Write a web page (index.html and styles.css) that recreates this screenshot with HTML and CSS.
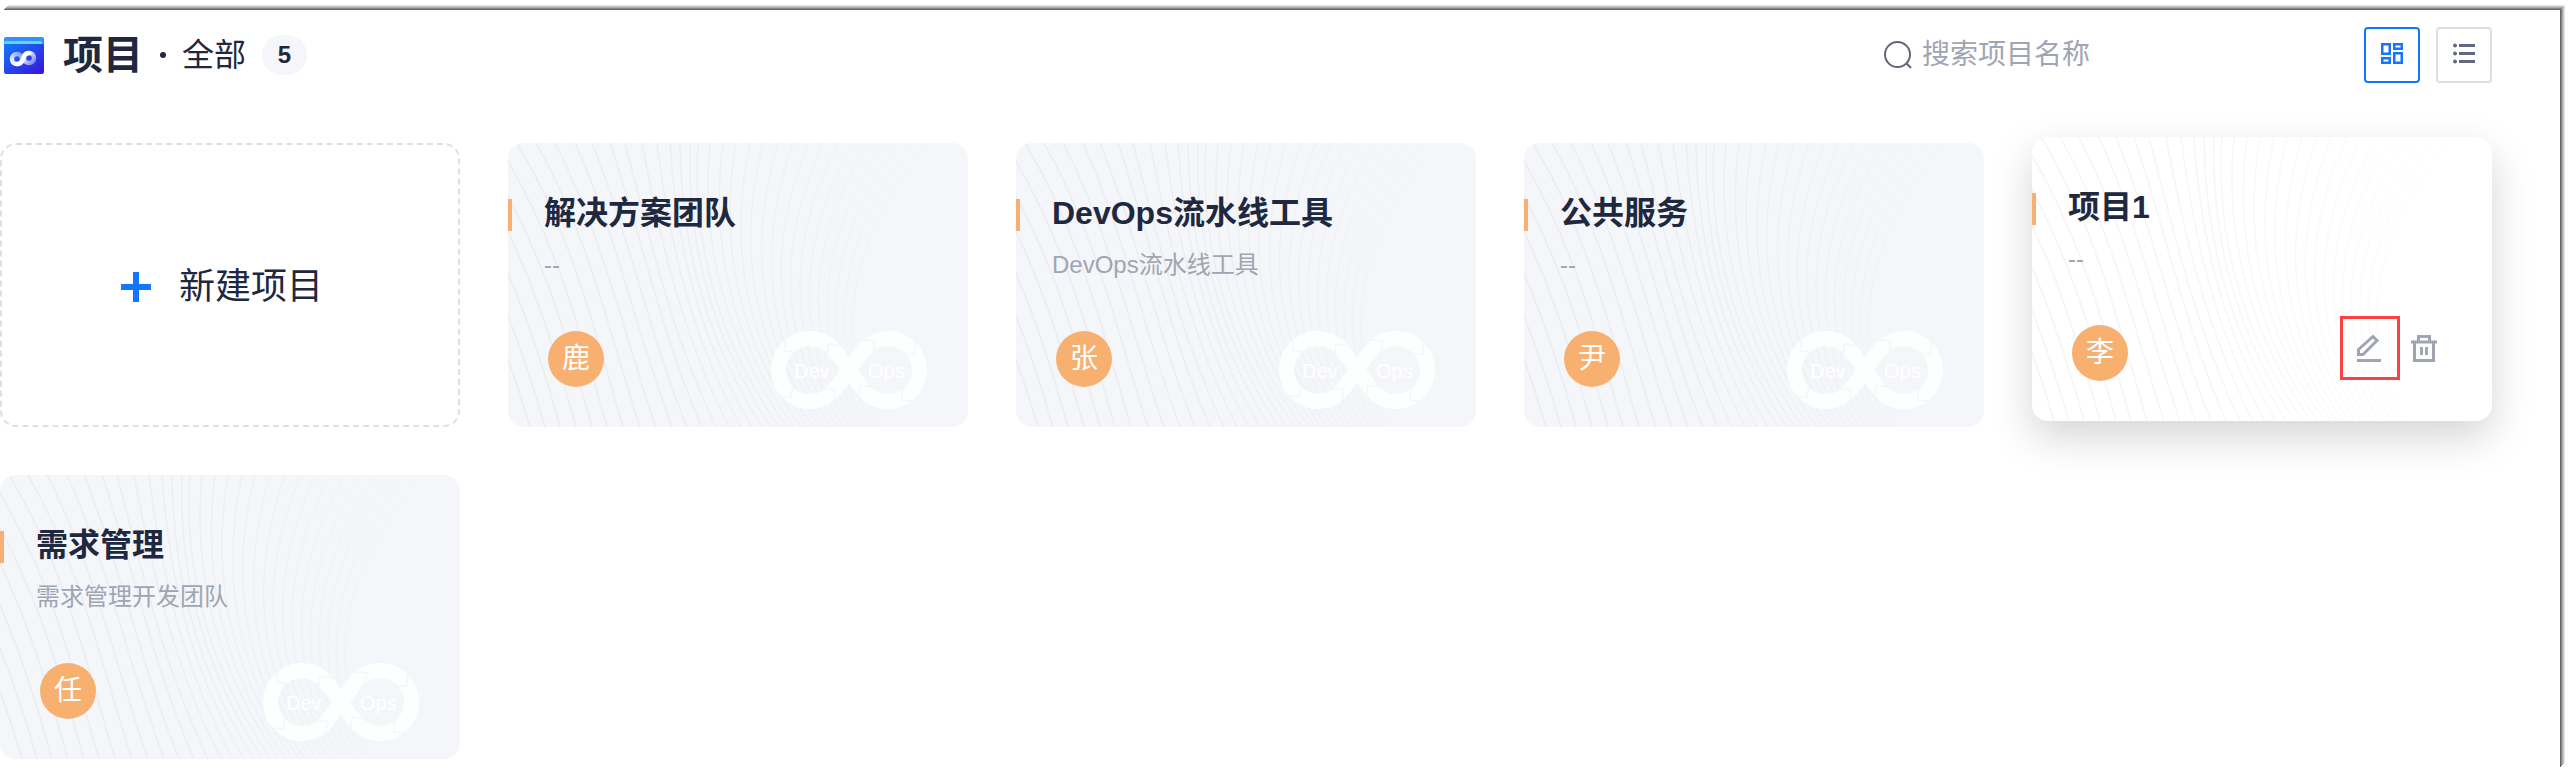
FILE: index.html
```html
<!DOCTYPE html>
<html lang="zh-CN">
<head>
<meta charset="utf-8">
<meta name="viewport" content="width=device-width, initial-scale=1">
<title>项目</title>
<link rel="stylesheet" href="styles.css">
</head>
<body>
<svg class="defs" aria-hidden="true">
  <defs>
    <linearGradient id="fade" gradientUnits="userSpaceOnUse" x1="0" y1="0" x2="460" y2="0">
      <stop offset="0" stop-color="#000" stop-opacity=".04"/>
      <stop offset=".4" stop-color="#000" stop-opacity=".035"/>
      <stop offset=".95" stop-color="#000" stop-opacity="0"/>
    </linearGradient>
    <symbol id="waves" viewBox="0 0 460 284" preserveAspectRatio="none">
      <path fill="none" stroke="url(#fade)" stroke-width="1.5" d="M-115 0C-45 95-5 190 22 284M-93 0C-25 95 10 190 37 284M-72 0C-6 95 26 190 52 284M-51 0C14 95 42 190 68 284M-31 0C31 95 58 190 84 284M-11 0C49 95 72 190 99 284M9 0C66 95 87 190 115 284M28 0C82 95 101 190 132 284M47 0C96 95 115 190 148 284M67 0C110 95 128 190 164 284M84 0C122 95 141 190 179 284M102 0C134 95 153 190 194 284M117 0C142 95 163 190 208 284M134 0C152 95 173 190 221 284M149 0C161 95 181 190 233 284M162 0C168 95 188 190 244 284M172 0C173 95 194 190 254 284M182 0C179 95 200 190 263 284M190 0C184 95 206 190 271 284M202 0C193 95 213 190 279 284M215 0C203 95 219 190 286 284M228 0C212 95 226 190 293 284M242 0C222 95 232 190 299 284M255 0C231 95 239 190 305 284M270 0C242 95 246 190 311 284M285 0C252 95 253 190 317 284M300 0C262 95 260 190 323 284M315 0C272 95 267 190 329 284M330 0C282 95 275 190 335 284M345 0C292 95 283 190 341 284M360 0C302 95 291 190 347 284M375 0C312 95 299 190 353 284M390 0C322 95 307 190 359 284M405 0C332 95 315 190 365 284M420 0C342 95 323 190 371 284"/>
    </symbol>
    <symbol id="devops" viewBox="0 0 156 78">
      <path fill="none" stroke="#fdfefe" stroke-width="15" d="M64.4 20.4A31.5 31.5 0 1 0 64.4 57.6L91.6 20.4A31.5 31.5 0 1 1 91.6 57.6Z"/>
      <path fill="none" stroke="#f5f6fa" stroke-width="1.5" d="M14 7V20L27 21M56 27L57 13L72 15M11 65L20 66L22 54M54 58L64 58L63 70M91 9L104 10L102 21M130 22L144 23L145 9M101 56L89 54L88 64M132 56L131 69L144 70"/>
      <text class="watermark-text" x="23" y="47">Dev</text>
      <text class="watermark-text" x="97" y="47">Ops</text>
    </symbol>
  </defs>
</svg>
<main class="page">
  <header class="header">
    <svg class="brand" viewBox="0 0 48 48" aria-hidden="true">
      <defs>
        <linearGradient id="box" x1="0" y1="0" x2="1" y2="1"><stop offset="0" stop-color="#1478fa"/><stop offset="1" stop-color="#3a12dc"/></linearGradient>
        <linearGradient id="loop-left" x1="0" y1="1" x2="1" y2="0"><stop offset="0" stop-color="#fff"/><stop offset="1" stop-color="#fff" stop-opacity=".4"/></linearGradient>
        <linearGradient id="loop-right" x1="0" y1="0" x2="1" y2="1"><stop offset="0" stop-color="#fff"/><stop offset="1" stop-color="#fff" stop-opacity=".4"/></linearGradient>
      </defs>
      <rect x="4" y="6" width="40" height="16" rx="2" fill="#3591ff"/>
      <path fill="#5cdbd8" d="M4 12Q4 10 6 10H40Q42 10 42 12V16H4Z"/>
      <path fill="url(#box)" d="M4 13H44V41Q44 43 42 43H6Q4 43 4 41Z"/>
      <circle cx="17" cy="28" r="5" fill="none" stroke="url(#loop-left)" stroke-width="4.500"/>
      <circle cx="29" cy="27" r="5" fill="none" stroke="url(#loop-right)" stroke-width="4.500"/>
      <path fill="none" stroke="#fff" stroke-width="4.500" stroke-linecap="round" d="M17 33C21 33 22 31 23 28C24 24 26 22 29 22"/>
    </svg>
    <h1 class="title">项目</h1>
    <span class="dot"></span>
    <span class="scope">全部</span>
    <span class="count">5</span>
    <label class="search">
      <svg class="search-icon" viewBox="0 0 28 28" aria-hidden="true"><circle cx="13.500" cy="13.500" r="12.500"/><path d="M22 22L27 27"/></svg>
      <input class="search-input" type="text" placeholder="搜索项目名称" aria-label="搜索项目名称">
    </label>
    <div class="views">
      <button class="view active" type="button" aria-label="卡片视图">
        <svg viewBox="0 0 24 24" width="24" height="24" aria-hidden="true"><path fill="none" stroke="currentColor" stroke-width="2.500" d="M2.250 1.250h7.500v9.500h-7.500zM14.250 1.250h7.500v4.500h-7.500zM2.250 15.250h7.500v4.500h-7.500zM14.250 10.250h7.500v9.500h-7.500z"/></svg>
      </button>
      <button class="view" type="button" aria-label="列表视图">
        <svg viewBox="0 0 24 24" width="24" height="24" aria-hidden="true"><path fill="none" stroke="currentColor" stroke-width="3" d="M7 2.500h16M7 10.500h16M7 18.500h16"/><g fill="currentColor"><circle cx="3" cy="2.500" r="2"/><circle cx="3" cy="10.500" r="2"/><circle cx="3" cy="18.500" r="2"/></g></svg>
      </button>
    </div>
  </header>
  <section class="grid">
    <button class="card create" type="button">
      <svg class="plus" viewBox="0 0 30 30" aria-hidden="true"><path stroke="currentColor" stroke-width="6" d="M15 0V30M0 15H30"/></svg>
      <span>新建项目</span>
    </button>
    <article class="card project">
      <svg class="waves" aria-hidden="true"><use href="#waves"/></svg>
      <svg class="watermark" aria-hidden="true"><use href="#devops"/></svg>
      <h2 class="name">解决方案团队</h2>
      <p class="desc">--</p>
      <span class="avatar">鹿</span>
    </article>
    <article class="card project">
      <svg class="waves" aria-hidden="true"><use href="#waves"/></svg>
      <svg class="watermark" aria-hidden="true"><use href="#devops"/></svg>
      <h2 class="name">DevOps流水线工具</h2>
      <p class="desc">DevOps流水线工具</p>
      <span class="avatar">张</span>
    </article>
    <article class="card project">
      <svg class="waves" aria-hidden="true"><use href="#waves"/></svg>
      <svg class="watermark" aria-hidden="true"><use href="#devops"/></svg>
      <h2 class="name">公共服务</h2>
      <p class="desc">--</p>
      <span class="avatar">尹</span>
    </article>
    <article class="card project raised">
      <svg class="waves" aria-hidden="true"><use href="#waves"/></svg>
      <h2 class="name">项目1</h2>
      <p class="desc">--</p>
      <span class="avatar">李</span>
      <div class="actions">
        <button class="action marked" type="button" aria-label="编辑">
          <svg viewBox="0 0 28 28" width="28" height="28" aria-hidden="true"><path fill="none" stroke="currentColor" stroke-width="3" d="M1 26.500H25M2.500 15.500L17 2.500L21 6.500L7 20.500H2.500Z"/></svg>
        </button>
        <button class="action" type="button" aria-label="删除">
          <svg viewBox="0 0 28 28" width="28" height="28" aria-hidden="true"><path fill="none" stroke="currentColor" stroke-width="3" d="M1 8H27M8.500 8V2.500H19.500V8M4.500 8V26.500H23.500V8M11.500 13V21M16.500 13V21"/></svg>
        </button>
      </div>
    </article>
    <article class="card project">
      <svg class="waves" aria-hidden="true"><use href="#waves"/></svg>
      <svg class="watermark" aria-hidden="true"><use href="#devops"/></svg>
      <h2 class="name">需求管理</h2>
      <p class="desc">需求管理开发团队</p>
      <span class="avatar">任</span>
    </article>
  </section>
</main>
</body>
</html>
```
FILE: styles.css
```css
* {
  box-sizing: border-box;
}

body {
  margin: 0;
  background: #fff;
  color: #20283f;
  font-family: "Liberation Sans", "Noto Sans CJK SC", sans-serif;
}

button,
input {
  font: inherit;
  color: inherit;
}

h1,
h2,
p {
  margin: 0;
}

.defs {
  position: absolute;
  width: 0;
  height: 0;
}

.page {
  position: relative;
  isolation: isolate;
  min-height: 100vh;
  padding: 27px 78px 16px 0;
}

/* bevelled frame behind the content */
.page::before {
  content: "";
  position: absolute;
  inset: 10px 10px 7px 3px;
  z-index: -1;
  background: #fff;
  box-shadow: 1px -1px #666, 2px -2px #888, 3px -3px #aaa, 4px -4px #c8c8c8, 5px -5px #e4e4e4;
}

.header {
  display: flex;
  align-items: center;
  height: 56px;
  margin-bottom: 60px;
}

.brand {
  width: 48px;
  height: 48px;
  margin-right: 15px;
}

.title {
  font-size: 40px;
  line-height: 48px;
  font-weight: 700;
}

.dot {
  width: 6px;
  height: 6px;
  margin: 0 16px 0 17px;
  border-radius: 50%;
  background: #20283f;
}

.scope {
  font-size: 32px;
  line-height: 40px;
}

.count {
  min-width: 45px;
  margin-left: 16px;
  border-radius: 20px;
  background: #f5f6fa;
  font-size: 24px;
  line-height: 40px;
  font-weight: 700;
  text-align: center;
}

.search {
  display: flex;
  align-items: center;
  gap: 10px;
  width: 440px;
  margin: 0 40px 0 auto;
}

.search-icon {
  flex: none;
  width: 28px;
  height: 28px;
  fill: none;
  stroke: #5e6678;
  stroke-width: 2;
}

.search-input {
  flex: 1;
  min-width: 0;
  height: 48px;
  padding: 0;
  border: 0;
  outline: 0;
  background: none;
  font-size: 28px;
}

.search-input::placeholder {
  color: #9fa5b3;
  opacity: 1;
}

.views {
  display: flex;
  gap: 16px;
}

.view {
  display: flex;
  align-items: center;
  justify-content: center;
  width: 56px;
  height: 56px;
  padding: 0;
  border: 2px solid #dcdfe6;
  border-radius: 4px;
  background: none;
  color: #636a7d;
}

.view.active {
  border-color: #1476ff;
  color: #1476ff;
}

.grid {
  display: grid;
  grid-template-columns: repeat(5, 1fr);
  gap: 48px;
}

.card {
  min-height: 284px;
  border-radius: 16px;
}

.create {
  display: flex;
  align-items: center;
  justify-content: center;
  gap: 28px;
  padding: 4px 16px 0 0;
  border: 2px dashed #dcdfe6;
  background: none;
  font-size: 36px;
  line-height: 48px;
}

.plus {
  width: 30px;
  height: 30px;
  color: #1476ff;
}

.project {
  position: relative;
  isolation: isolate;
  display: flex;
  flex-direction: column;
  align-items: flex-start;
  padding: 50px 40px 40px 36px;
  overflow: hidden;
  background: #f5f6fa;
}

.waves {
  position: absolute;
  inset: 0;
  z-index: -1;
  width: 100%;
  height: 100%;
}

.watermark {
  position: absolute;
  right: 41px;
  bottom: 18px;
  z-index: -1;
  width: 156px;
  height: 78px;
}

.watermark-text {
  font-size: 20px;
  fill: #fff;
}

.name {
  font-size: 32px;
  line-height: 40px;
  font-weight: 700;
}

/* accent bar on the card edge */
.name::before {
  content: "";
  position: absolute;
  left: 0;
  top: 56px;
  width: 4px;
  height: 32px;
  background: #f8b071;
}

.desc {
  margin-top: 16px;
  color: #9fa5b3;
  font-size: 24px;
  line-height: 32px;
}

.avatar {
  width: 56px;
  height: 56px;
  margin: auto 0 0 4px;
  border-radius: 50%;
  background: #f8b071;
  color: #fff;
  font-size: 28px;
  line-height: 56px;
  text-align: center;
}

.raised {
  background: #fff;
  transform: translateY(-6px);
  box-shadow: 0 16px 40px rgba(0, 0, 0, .17);
}

.actions {
  position: absolute;
  right: 44px;
  bottom: 41px;
  display: flex;
}

.action {
  display: flex;
  align-items: center;
  justify-content: center;
  width: 48px;
  height: 64px;
  padding: 0;
  border: 0;
  background: none;
  color: #9fa5b3;
}

.marked {
  width: 60px;
  border: 3px solid #fb4141;
}
```
